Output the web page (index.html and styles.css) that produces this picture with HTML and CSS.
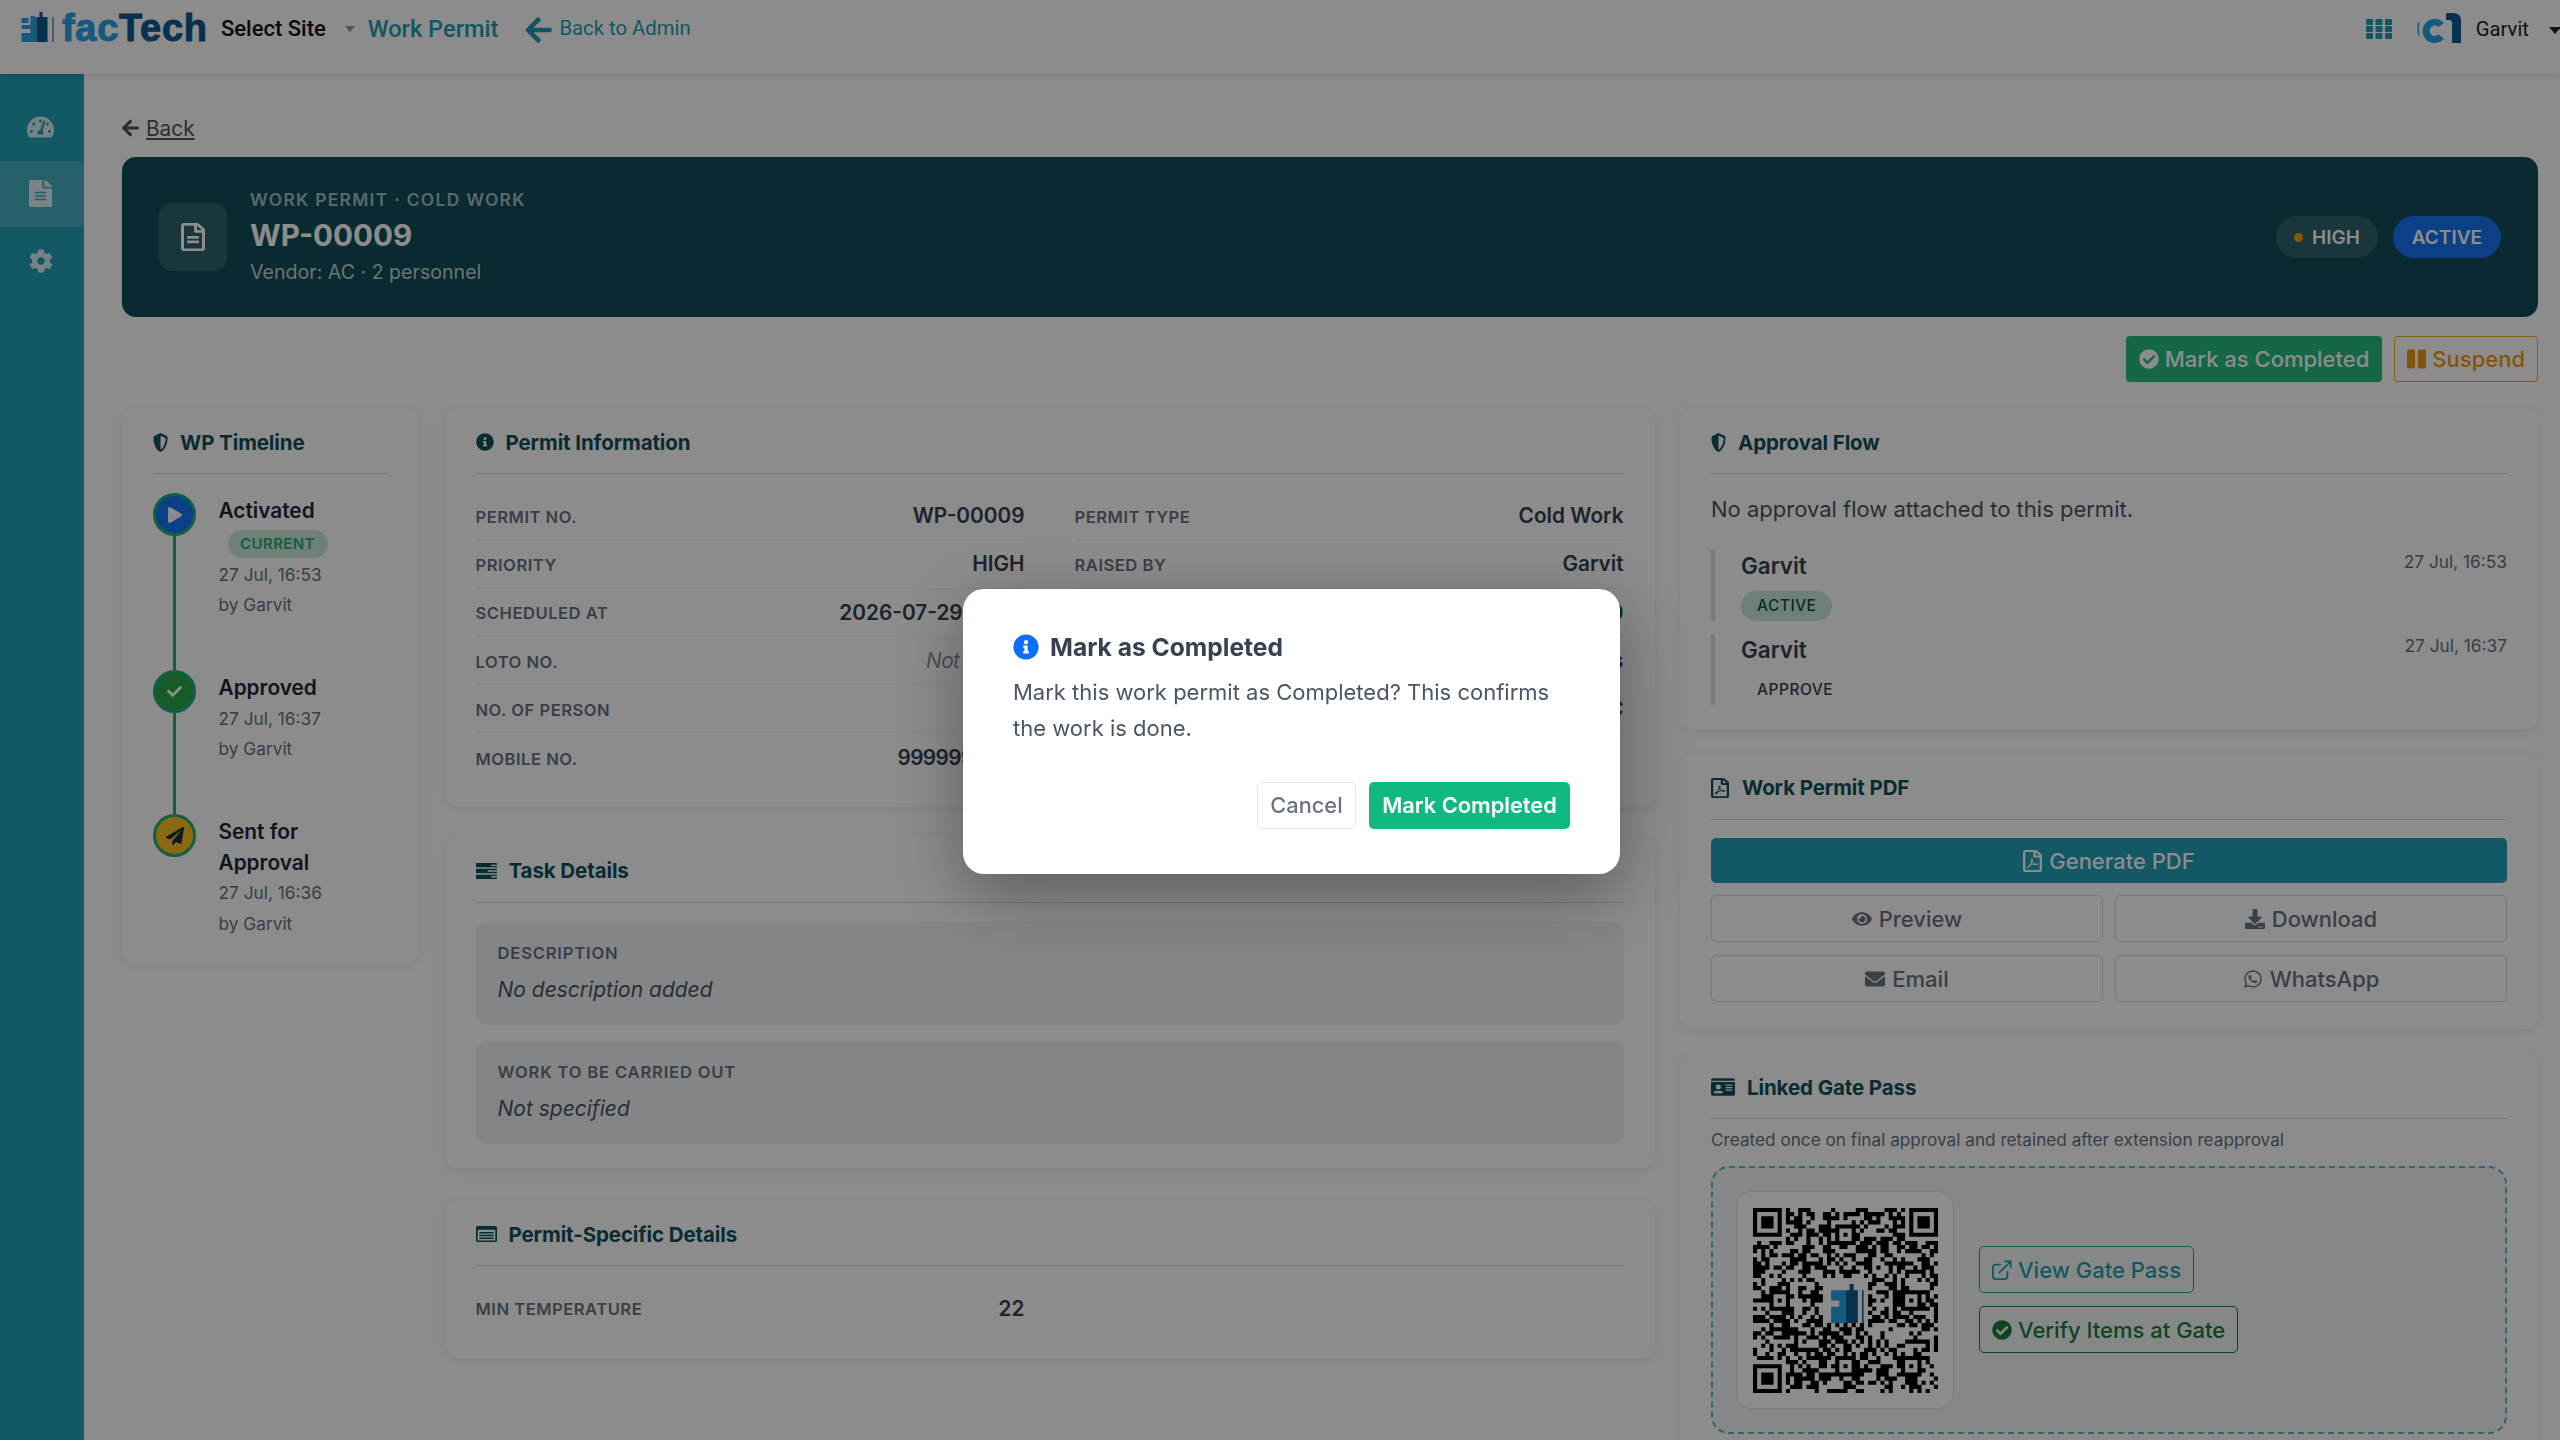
FILE: index.html
```html
<!DOCTYPE html>
<html lang="en">
<head>
<meta charset="utf-8">
<title>WP-00009</title>
<link rel="stylesheet" href="styles.css">
</head>
<body>
<svg class="sprite" xmlns="http://www.w3.org/2000/svg">
<symbol id="i-gauge" viewBox="0 0 576 512"><path d="M288 32C128.94 32 0 160.94 0 320c0 52.8 14.25 102.26 39.06 144.8 5.61 9.62 16.3 15.2 27.44 15.2h443c11.14 0 21.83-5.58 27.44-15.2C561.75 422.26 576 372.8 576 320c0-159.06-128.94-288-288-288zm0 64c14.71 0 26.58 10.13 30.32 23.65-1.11 2.26-2.64 4.23-3.45 6.67l-9.22 27.67c-5.13 3.49-10.97 6.01-17.64 6.01-17.67 0-32-14.33-32-32S270.33 96 288 96zM96 384c-17.67 0-32-14.33-32-32s14.33-32 32-32 32 14.33 32 32-14.33 32-32 32zm48-160c-17.67 0-32-14.33-32-32s14.33-32 32-32 32 14.33 32 32-14.33 32-32 32zm246.77-72.41l-61.33 184C343.13 347.33 352 364.54 352 384c0 11.72-3.38 22.55-8.88 32H232.88c-5.5-9.45-8.88-20.28-8.88-32 0-33.94 26.5-61.43 59.9-63.59l61.34-184.01c4.17-12.56 17.73-19.45 30.36-15.17 12.57 4.19 19.35 17.79 15.17 30.36zm14.66 57.2l15.52-46.55c3.47-1.29 7.13-2.23 11.05-2.23 17.67 0 32 14.33 32 32s-14.33 32-32 32c-11.38-.01-20.89-6.27-26.57-15.22zM480 384c-17.67 0-32-14.33-32-32s14.33-32 32-32 32 14.33 32 32-14.33 32-32 32z"/></symbol>
<symbol id="i-file-s" viewBox="0 0 384 512" preserveAspectRatio="none"><path d="M224 136V0H24C10.7 0 0 10.7 0 24v464c0 13.3 10.7 24 24 24h336c13.3 0 24-10.7 24-24V160H248c-13.2 0-24-10.8-24-24zm64 236c0 6.6-5.4 12-12 12H108c-6.6 0-12-5.4-12-12v-8c0-6.6 5.4-12 12-12h168c6.6 0 12 5.4 12 12v8zm0-64c0 6.6-5.4 12-12 12H108c-6.6 0-12-5.4-12-12v-8c0-6.6 5.4-12 12-12h168c6.6 0 12 5.4 12 12v8zm0-72v8c0 6.6-5.4 12-12 12H108c-6.6 0-12-5.4-12-12v-8c0-6.6 5.4-12 12-12h168c6.6 0 12 5.4 12 12zm96-114.1v6.1H256V0h6.1c6.4 0 12.5 2.5 17 7l97.9 98c4.5 4.5 7 10.6 7 16.9z"/></symbol>
<symbol id="i-file-r" viewBox="0 0 384 512" preserveAspectRatio="none"><path d="M288 248v28c0 6.6-5.4 12-12 12H108c-6.6 0-12-5.4-12-12v-28c0-6.6 5.4-12 12-12h168c6.6 0 12 5.4 12 12zm-12 72H108c-6.6 0-12 5.4-12 12v28c0 6.6 5.4 12 12 12h168c6.6 0 12-5.4 12-12v-28c0-6.6-5.4-12-12-12zm108-188.1V464c0 26.5-21.5 48-48 48H48c-26.5 0-48-21.5-48-48V48C0 21.5 21.5 0 48 0h204.1C264.8 0 277 5.1 286 14.1L369.9 98c9 8.9 14.1 21.2 14.1 33.9zm-128-80V128h76.1L256 51.9zM336 464V176H232c-13.3 0-24-10.7-24-24V48H48v416h288z"/></symbol>
<symbol id="i-cog" viewBox="0 0 512 512"><path d="M487.4 315.7l-42.6-24.6c4.3-23.2 4.3-47 0-70.2l42.6-24.6c4.9-2.8 7.1-8.6 5.5-14-11.1-35.6-30-67.8-54.7-94.6-3.8-4.1-10-5.1-14.8-2.3L380.8 110c-17.9-15.4-38.5-27.3-60.8-35.1V25.8c0-5.6-3.9-10.5-9.4-11.7-36.7-8.2-74.3-7.8-109.2 0-5.5 1.2-9.4 6.1-9.4 11.7V75c-22.2 7.9-42.8 19.8-60.8 35.1L88.7 85.5c-4.9-2.8-11-1.9-14.8 2.3-24.7 26.7-43.6 58.9-54.7 94.6-1.7 5.4.6 11.2 5.5 14L67.3 221c-4.3 23.2-4.3 47 0 70.2l-42.6 24.6c-4.9 2.8-7.1 8.6-5.5 14 11.1 35.6 30 67.8 54.7 94.6 3.8 4.1 10 5.1 14.8 2.3l42.6-24.6c17.9 15.4 38.5 27.3 60.8 35.1v49.2c0 5.6 3.9 10.5 9.4 11.7 36.7 8.2 74.3 7.8 109.2 0 5.5-1.2 9.4-6.1 9.4-11.7v-49.2c22.2-7.9 42.8-19.8 60.8-35.1l42.6 24.6c4.9 2.8 11 1.9 14.8-2.3 24.7-26.7 43.6-58.9 54.7-94.6 1.5-5.5-.7-11.3-5.6-14.1zM256 336c-44.1 0-80-35.9-80-80s35.9-80 80-80 80 35.9 80 80-35.9 80-80 80z"/></symbol>
<symbol id="i-left" viewBox="0 0 448 512"><path d="M257.5 445.1l-22.2 22.2c-9.4 9.4-24.6 9.4-33.9 0L7 273c-9.4-9.4-9.4-24.6 0-33.9L201.4 44.7c9.4-9.4 24.6-9.4 33.9 0l22.2 22.2c9.5 9.5 9.3 25-.4 34.3L136.6 216H424c13.3 0 24 10.7 24 24v32c0 13.3-10.7 24-24 24H136.6l120.5 114.8c9.8 9.3 10 24.8.4 34.3z"/></symbol>
<symbol id="i-check-c" viewBox="0 0 512 512"><path d="M504 256c0 136.967-111.033 248-248 248S8 392.967 8 256 119.033 8 256 8s248 111.033 248 248zM227.314 387.314l184-184c6.248-6.248 6.248-16.379 0-22.627l-22.627-22.627c-6.248-6.249-16.379-6.249-22.628 0L216 308.118l-70.059-70.059c-6.248-6.248-16.379-6.248-22.628 0l-22.627 22.627c-6.248 6.248-6.248 16.379 0 22.627l104 104c6.249 6.25 16.379 6.25 22.628.001z"/></symbol>
<symbol id="i-pause" viewBox="0 0 448 512"><path d="M144 479H48c-26.5 0-48-21.5-48-48V79c0-26.5 21.5-48 48-48h96c26.5 0 48 21.5 48 48v352c0 26.5-21.5 48-48 48zm304-48V79c0-26.5-21.5-48-48-48h-96c-26.5 0-48 21.5-48 48v352c0 26.5 21.5 48 48 48h96c26.5 0 48-21.5 48-48z"/></symbol>
<symbol id="i-shield" viewBox="0 0 512 512" preserveAspectRatio="none"><path d="M466.5 83.7l-192-80a48.15 48.15 0 0 0-36.9 0l-192 80C27.7 91.1 16 108.6 16 128c0 198.5 114.5 335.7 221.5 380.3 11.8 4.9 25.1 4.9 36.9 0C360.1 472.6 496 349.3 496 128c0-19.4-11.7-36.9-29.5-44.3zM256.1 446.3l-.1-381 175.9 73.3c-3.3 151.4-82.1 261.1-175.8 307.7z"/></symbol>
<symbol id="i-info" viewBox="0 0 512 512"><path d="M256 8C119.043 8 8 119.083 8 256c0 136.997 111.043 248 248 248s248-111.003 248-248C504 119.083 392.957 8 256 8zm0 110c23.196 0 42 18.804 42 42s-18.804 42-42 42-42-18.804-42-42 18.804-42 42-42zm56 254c0 6.627-5.373 12-12 12h-88c-6.627 0-12-5.373-12-12v-24c0-6.627 5.373-12 12-12h12v-64h-12c-6.627 0-12-5.373-12-12v-24c0-6.627 5.373-12 12-12h64c6.627 0 12 5.373 12 12v100h12c6.627 0 12 5.373 12 12v24z"/></symbol>
<symbol id="i-play" viewBox="0 0 448 512"><path d="M424.4 214.7L72.4 6.6C43.8-10.3 0 6.1 0 47.9V464c0 37.5 40.7 60.1 72.4 41.3l352-208c31.4-18.5 31.5-64.1 0-82.6z"/></symbol>
<symbol id="i-check" viewBox="0 0 512 512"><path d="M173.898 439.404l-166.4-166.4c-9.997-9.997-9.997-26.206 0-36.204l36.203-36.204c9.997-9.998 26.207-9.998 36.204 0L192 312.69 432.095 72.596c9.997-9.997 26.207-9.997 36.204 0l36.203 36.204c9.997 9.997 9.997 26.206 0 36.204l-294.4 294.401c-9.998 9.997-26.207 9.997-36.204-.001z"/></symbol>
<symbol id="i-plane" viewBox="0 0 512 512"><path d="M476 3.2L12.5 270.6c-18.1 10.4-15.8 35.6 2.2 43.2L121 358.4l287.3-253.2c5.5-4.9 13.3 2.6 8.6 8.3L176 407v80.5c0 23.6 28.5 32.9 42.5 15.8L282 426l124.6 52.2c14.2 6 30.4-2.9 33-18.2l72-432C515 7.8 493.3-6.8 476 3.2z"/></symbol>
<symbol id="i-eye" viewBox="0 0 576 512"><path d="M572.52 241.4C518.29 135.59 410.93 64 288 64S57.68 135.64 3.48 241.41a32.35 32.35 0 0 0 0 29.19C57.71 376.41 165.07 448 288 448s230.32-71.64 284.52-177.41a32.35 32.35 0 0 0 0-29.19zM288 400a144 144 0 1 1 144-144 143.93 143.93 0 0 1-144 144zm0-240a95.31 95.31 0 0 0-25.31 3.79 47.85 47.85 0 0 1-66.9 66.9A95.78 95.78 0 1 0 288 160z"/></symbol>
<symbol id="i-download" viewBox="0 0 512 512"><path d="M216 0h80c13.3 0 24 10.7 24 24v168h87.7c17.8 0 26.7 21.5 14.1 34.1L269.7 378.3c-7.5 7.5-19.8 7.5-27.3 0L90.1 226.1c-12.6-12.6-3.7-34.1 14.1-34.1H192V24c0-13.3 10.7-24 24-24zm296 376v112c0 13.3-10.7 24-24 24H24c-13.3 0-24-10.7-24-24V376c0-13.3 10.7-24 24-24h146.7l49 49c20.1 20.1 52.5 20.1 72.6 0l49-49H488c13.3 0 24 10.7 24 24zm-124 88c0-11-9-20-20-20s-20 9-20 20 9 20 20 20 20-9 20-20zm64 0c0-11-9-20-20-20s-20 9-20 20 9 20 20 20 20-9 20-20z"/></symbol>
<symbol id="i-mail" viewBox="0 0 512 512"><path d="M502.3 190.8c3.9-3.1 9.7-.2 9.7 4.7V400c0 26.5-21.5 48-48 48H48c-26.5 0-48-21.5-48-48V195.6c0-5 5.7-7.8 9.7-4.7 22.4 17.4 52.1 39.5 154.1 113.6 21.1 15.4 56.7 47.8 92.2 47.6 35.7.3 72-32.8 92.3-47.6 102-74.1 131.6-96.3 154-113.7zM256 320c23.2.4 56.6-29.2 73.4-41.4 132.7-96.3 142.8-104.7 173.4-128.7 5.8-4.5 9.2-11.5 9.2-18.9v-19c0-26.5-21.5-48-48-48H48C21.5 64 0 85.5 0 112v19c0 7.4 3.4 14.3 9.2 18.9 30.6 23.9 40.7 32.4 173.4 128.7 16.8 12.2 50.2 41.8 73.4 41.4z"/></symbol>
<symbol id="i-wa" viewBox="0 0 448 512"><path d="M380.9 97.1C339 55.1 283.2 32 223.9 32c-122.4 0-222 99.6-222 222 0 39.1 10.2 77.3 29.6 111L0 480l117.7-30.9c32.4 17.7 68.9 27 106.1 27h.1c122.3 0 224.1-99.6 224.1-222 0-59.3-25.2-115-67.1-157zm-157 341.6c-33.2 0-65.7-8.9-94-25.7l-6.7-4-69.8 18.3L72 359.2l-4.4-7c-18.5-29.4-28.2-63.3-28.2-98.2 0-101.7 82.8-184.5 184.6-184.5 49.3 0 95.6 19.2 130.4 54.1 34.8 34.9 56.2 81.2 56.1 130.5 0 101.8-84.9 184.6-186.6 184.6zm101.2-138.2c-5.5-2.8-32.8-16.2-37.9-18-5.1-1.9-8.8-2.8-12.5 2.8-3.7 5.6-14.3 18-17.6 21.8-3.2 3.7-6.5 4.2-12 1.4-32.6-16.3-54-29.1-75.5-66-5.7-9.8 5.7-9.1 16.3-30.3 1.8-3.7.9-6.9-.5-9.7-1.4-2.8-12.5-30.1-17.1-41.2-4.5-10.8-9.1-9.3-12.5-9.5-3.2-.2-6.9-.2-10.6-.2-3.7 0-9.7 1.4-14.8 6.9-5.1 5.6-19.4 19-19.4 46.3 0 27.3 19.9 53.7 22.6 57.4 2.8 3.7 39.1 59.7 94.8 83.8 35.2 15.2 49 16.5 66.6 13.9 10.7-1.6 32.8-13.4 37.4-26.4 4.6-13 4.6-24.1 3.2-26.4-1.3-2.5-5-3.9-10.5-6.6z"/></symbol>
<symbol id="i-pdf" viewBox="0 0 384 512" preserveAspectRatio="none"><path d="M369.9 97.9L286 14C277 5 264.8-.1 252.1-.1H48C21.5 0 0 21.5 0 48v416c0 26.5 21.5 48 48 48h288c26.5 0 48-21.5 48-48V131.9c0-12.7-5.1-25-14.1-34zM332.1 128H256V51.9l76.1 76.1zM48 464V48h160v104c0 13.3 10.7 24 24 24h104v288H48zm250.2-143.7c-12.2-12-47-8.7-64.4-6.5-17.2-10.5-28.7-25-36.8-46.3 3.9-16.1 10.1-40.6 5.4-56-4.2-26.2-37.8-23.6-42.6-5.9-4.4 16.1-.4 38.5 7 67.1-10 23.9-24.9 56-35.4 74.4-20 10.3-47 26.2-51 46.2-3.3 15.8 26 55.2 76.1-31.2 22.4-7.4 46.8-16.5 68.4-20.1 18.9 10.2 41 17 55.8 17 25.5 0 28-28.2 17.5-38.7zm-198.1 77.8c5.1-13.7 24.5-29.5 30.4-35-19 30.3-30.4 35.7-30.4 35zm81.6-190.6c7.4 0 6.7 32.1 1.8 40.8-4.4-13.9-4.3-40.8-1.8-40.8zm-24.4 136.6c9.7-16.9 18-37 24.7-54.7 8.3 15.1 18.9 27.2 30.1 35.5-20.8 4.3-38.9 13.1-54.8 19.2zm131.6-5s-5 6-37.3-7.8c35.1-2.6 40.9 5.4 37.3 7.8z"/></symbol>
<symbol id="i-idcard" viewBox="0 0 576 512" preserveAspectRatio="none"><path d="M528 32H48C21.5 32 0 53.5 0 80v16h576V80c0-26.5-21.5-48-48-48zM0 432c0 26.5 21.5 48 48 48h480c26.5 0 48-21.5 48-48V128H0v304zm352-232c0-4.4 3.6-8 8-8h144c4.4 0 8 3.6 8 8v16c0 4.4-3.6 8-8 8H360c-4.4 0-8-3.6-8-8v-16zm0 64c0-4.4 3.6-8 8-8h144c4.4 0 8 3.6 8 8v16c0 4.4-3.6 8-8 8H360c-4.4 0-8-3.6-8-8v-16zm0 64c0-4.4 3.6-8 8-8h144c4.4 0 8 3.6 8 8v16c0 4.4-3.6 8-8 8H360c-4.4 0-8-3.6-8-8v-16zM176 192c35.3 0 64 28.7 64 64s-28.7 64-64 64-64-28.7-64-64 28.7-64 64-64zM67.1 396.2C75.5 370.5 99.6 352 128 352h8.2c12.3 5.1 25.7 8 39.8 8s27.6-2.9 39.8-8h8.2c28.4 0 52.5 18.5 60.9 44.2 3.2 9.9-5.2 19.8-15.6 19.8H82.7c-10.4 0-18.8-10-15.6-19.8z"/></symbol>
<symbol id="i-bars" viewBox="0 0 25 22" preserveAspectRatio="none"><path d="M1 0h23a1 1 0 0 1 1 1v1.500h-7v1.500h7v1a1 1 0 0 1-1 1H1a1 1 0 0 1-1-1V1a1 1 0 0 1 1-1zM1 8h23a1 1 0 0 1 1 1v1h-11v2h11v1a1 1 0 0 1-1 1H1a1 1 0 0 1-1-1V9a1 1 0 0 1 1-1zM1 16h23a1 1 0 0 1 1 1v1h-7v2h7v1a1 1 0 0 1-1 1H1a1 1 0 0 1-1-1v-4a1 1 0 0 1 1-1z"/></symbol>
<symbol id="i-list" viewBox="0 0 25 21" preserveAspectRatio="none"><path fill-rule="evenodd" d="M2 0h21a2 2 0 0 1 2 2v17a2 2 0 0 1-2 2H2a2 2 0 0 1-2-2V2a2 2 0 0 1 2-2zm0 5v14h21V5H2zm2 3h17v2H4V8zm0 3.500h17v2H4v-2zM4 15h17v2H4v-2z"/></symbol>
<symbol id="i-ext" viewBox="0 0 22 22"><path fill="none" stroke="currentColor" stroke-width="2" stroke-linecap="round" d="M17 13v5a3 3 0 0 1-3 3H4a3 3 0 0 1-3-3V8a3 3 0 0 1 3-3h5M8 14L20 2M14 1.500h6.500V8"/></symbol>
<symbol id="i-grid" viewBox="0 0 26 20"><path d="M1 0h5a1 1 0 0 1 1 1v4a1 1 0 0 1-1 1H1a1 1 0 0 1-1-1V1a1 1 0 0 1 1-1zm9.500 0h5a1 1 0 0 1 1 1v4a1 1 0 0 1-1 1h-5a1 1 0 0 1-1-1V1a1 1 0 0 1 1-1zM20 0h5a1 1 0 0 1 1 1v4a1 1 0 0 1-1 1h-5a1 1 0 0 1-1-1V1a1 1 0 0 1 1-1zM1 7h5a1 1 0 0 1 1 1v4a1 1 0 0 1-1 1H1a1 1 0 0 1-1-1V8a1 1 0 0 1 1-1zm9.500 0h5a1 1 0 0 1 1 1v4a1 1 0 0 1-1 1h-5a1 1 0 0 1-1-1V8a1 1 0 0 1 1-1zM20 7h5a1 1 0 0 1 1 1v4a1 1 0 0 1-1 1h-5a1 1 0 0 1-1-1V8a1 1 0 0 1 1-1zM1 14h5a1 1 0 0 1 1 1v4a1 1 0 0 1-1 1H1a1 1 0 0 1-1-1v-4a1 1 0 0 1 1-1zm9.500 0h5a1 1 0 0 1 1 1v4a1 1 0 0 1-1 1h-5a1 1 0 0 1-1-1v-4a1 1 0 0 1 1-1zM20 14h5a1 1 0 0 1 1 1v4a1 1 0 0 1-1 1h-5a1 1 0 0 1-1-1v-4a1 1 0 0 1 1-1z"/></symbol>
<symbol id="i-mark" viewBox="0 0 32 30"><path fill="#27a2e8" d="M0 6h7v5H0zM9 4h5v2h1v24H0v-9h9v-4H0v-4h9z"/><path fill="#0f5a92" d="M15 5h3V0h3v5h5v25H15z"/><path fill="#0f5a92" d="M31 5h1v25h-1z"/></symbol>
</svg>

<header class="topbar">
  <div class="brand">
    <svg class="brand-mark"><use href="#i-mark"/></svg>
    <span class="brand-text"><span class="brand-light">fac</span>Tech</span>
  </div>
  <span class="site">Select Site</span>
  <span class="caret caret-grey"></span>
  <span class="page-name">Work Permit</span>
  <svg class="back-admin-ico"><use href="#i-left"/></svg>
  <span class="back-admin">Back to Admin</span>
  <div class="top-right">
    <svg class="grid-ico"><use href="#i-grid"/></svg>
    <svg class="user-logo" viewBox="0 0 45 30">
      <path fill="#27a2e8" d="M1 9Q-.5 16 1.500 23L2.500 22Q1.200 16 2.500 10z"/>
      <path fill="#27a2e8" d="M18 6a12 12 0 1 0 9 19.500l-5.500-4a5.200 5.200 0 1 1 0-7.500l5.500-4A12 12 0 0 0 18 6z"/>
      <path fill="#0f5a92" d="M29 0h7q8 0 8 8v22h-9V10q0-3-3-3h-3z"/>
    </svg>
    <span class="user-name">Garvit</span>
    <span class="caret caret-dark"></span>
  </div>
</header>

<div class="shell">
  <nav class="sidebar">
    <div class="side-item"><svg class="side-gauge"><use href="#i-gauge"/></svg></div>
    <div class="side-item side-active"><svg class="side-file"><use href="#i-file-s"/></svg></div>
    <div class="side-item"><svg class="side-cog"><use href="#i-cog"/></svg></div>
  </nav>

  <main class="main">
    <div class="back-row">
      <svg class="back-ico"><use href="#i-left"/></svg>
      <span class="back-link">Back</span>
    </div>

    <section class="banner">
      <div class="banner-ico"><svg class="banner-file"><use href="#i-file-r"/></svg></div>
      <div class="banner-text">
        <div class="banner-kicker">WORK PERMIT · COLD WORK</div>
        <div class="banner-title">WP-00009</div>
        <div class="banner-sub">Vendor: AC · 2 personnel</div>
      </div>
      <div class="banner-chips">
        <span class="chip chip-high"><span class="chip-dot"></span>HIGH</span>
        <span class="chip chip-active">ACTIVE</span>
      </div>
    </section>

    <div class="actions">
      <button class="act act-green"><svg class="act-ico"><use href="#i-check-c"/></svg>Mark as Completed</button>
      <button class="act act-amber"><svg class="act-ico act-pause"><use href="#i-pause"/></svg>Suspend</button>
    </div>

    <div class="columns">
      <aside class="col">
        <section class="card card-timeline">
          <h3 class="card-title"><svg class="ct-ico ct-shield"><use href="#i-shield"/></svg><span>WP Timeline</span></h3>
          <div class="timeline">
            <div class="tl-item tl-first">
              <div class="tl-rail"><span class="tl-dot dot-blue"><svg class="dot-ico"><use href="#i-play"/></svg></span><span class="tl-line"></span></div>
              <div class="tl-body">
                <div class="tl-name">Activated</div>
                <span class="tl-current">CURRENT</span>
                <div class="tl-meta">27 Jul, 16:53</div>
                <div class="tl-meta">by Garvit</div>
              </div>
            </div>
            <div class="tl-item">
              <div class="tl-rail"><span class="tl-dot dot-green"><svg class="dot-ico dot-ico-sm"><use href="#i-check"/></svg></span><span class="tl-line"></span></div>
              <div class="tl-body">
                <div class="tl-name">Approved</div>
                <div class="tl-meta">27 Jul, 16:37</div>
                <div class="tl-meta">by Garvit</div>
              </div>
            </div>
            <div class="tl-item tl-last">
              <div class="tl-rail"><span class="tl-dot dot-yellow"><svg class="dot-ico dot-ico-dark"><use href="#i-plane"/></svg></span></div>
              <div class="tl-body">
                <div class="tl-name">Sent for<br>Approval</div>
                <div class="tl-meta">27 Jul, 16:36</div>
                <div class="tl-meta">by Garvit</div>
              </div>
            </div>
          </div>
        </section>
      </aside>

      <div class="col col-mid">
        <section class="card">
          <h3 class="card-title"><svg class="ct-ico ct-info"><use href="#i-info"/></svg><span>Permit Information</span></h3>
          <div class="info-grid">
            <div class="info-row"><span class="info-label">PERMIT NO.</span><span class="info-val">WP-00009</span></div>
            <div class="info-row"><span class="info-label">PERMIT TYPE</span><span class="info-val">Cold Work</span></div>
            <div class="info-row"><span class="info-label">PRIORITY</span><span class="info-val">HIGH</span></div>
            <div class="info-row"><span class="info-label">RAISED BY</span><span class="info-val">Garvit</span></div>
            <div class="info-row"><span class="info-label">SCHEDULED AT</span><span class="info-val">2026-07-29 10:00</span></div>
            <div class="info-row"><span class="info-val">2026-07-29 18:00</span></div>
            <div class="info-row"><span class="info-label">LOTO NO.</span><span class="info-val info-muted">Not added</span></div>
            <div class="info-row"><span class="info-val">Yes</span></div>
            <div class="info-row"><span class="info-label">NO. OF PERSON</span></div>
            <div class="info-row"><span class="info-val">AC</span></div>
            <div class="info-row info-end"><span class="info-label">MOBILE NO.</span><span class="info-val info-phone">9999999999</span></div>
            <div class="info-row info-end"></div>
          </div>
        </section>

        <section class="card card-task">
          <h3 class="card-title"><svg class="ct-ico ct-bars"><use href="#i-bars"/></svg><span>Task Details</span></h3>
          <div class="task-box task-first">
            <div class="task-label">DESCRIPTION</div>
            <div class="task-val">No description added</div>
          </div>
          <div class="task-box">
            <div class="task-label">WORK TO BE CARRIED OUT</div>
            <div class="task-val">Not specified</div>
          </div>
        </section>

        <section class="card card-spec">
          <h3 class="card-title"><svg class="ct-ico ct-bars"><use href="#i-list"/></svg><span>Permit-Specific Details</span></h3>
          <div class="info-grid">
            <div class="info-row info-end"><span class="info-label">MIN TEMPERATURE</span><span class="info-val">22</span></div>
          </div>
        </section>
      </div>

      <div class="col col-right">
        <section class="card">
          <h3 class="card-title"><svg class="ct-ico ct-shield"><use href="#i-shield"/></svg><span>Approval Flow</span></h3>
          <p class="flow-empty">No approval flow attached to this permit.</p>
          <div class="flow-entry flow-first">
            <div class="flow-top"><span class="flow-name">Garvit</span><span class="flow-time">27 Jul, 16:53</span></div>
            <span class="flow-chip flow-chip-active">ACTIVE</span>
          </div>
          <div class="flow-entry">
            <div class="flow-top"><span class="flow-name">Garvit</span><span class="flow-time">27 Jul, 16:37</span></div>
            <span class="flow-chip">APPROVE</span>
          </div>
        </section>

        <section class="card card-pdf">
          <h3 class="card-title"><svg class="ct-ico ct-pdf"><use href="#i-pdf"/></svg><span>Work Permit PDF</span></h3>
          <button class="pdf-gen"><svg class="btn-ico btn-pdf"><use href="#i-pdf"/></svg>Generate PDF</button>
          <div class="pdf-grid">
            <button class="pdf-btn"><svg class="btn-ico"><use href="#i-eye"/></svg>Preview</button>
            <button class="pdf-btn"><svg class="btn-ico"><use href="#i-download"/></svg>Download</button>
            <button class="pdf-btn"><svg class="btn-ico"><use href="#i-mail"/></svg>Email</button>
            <button class="pdf-btn"><svg class="btn-ico"><use href="#i-wa"/></svg>WhatsApp</button>
          </div>
        </section>

        <section class="card card-gate">
          <h3 class="card-title"><svg class="ct-ico ct-id"><use href="#i-idcard"/></svg><span>Linked Gate Pass</span></h3>
          <p class="gate-note">Created once on final approval and retained after extension reapproval</p>
          <div class="gate-box">
            <div class="qr-card"><svg id="qr" class="qr" viewBox="0 0 45 45"></svg></div>
            <div class="gate-actions">
              <button class="gate-btn gate-teal"><svg class="btn-ico"><use href="#i-ext"/></svg>View Gate Pass</button>
              <button class="gate-btn gate-green"><svg class="btn-ico"><use href="#i-check-c"/></svg>Verify Items at Gate</button>
            </div>
          </div>
        </section>
      </div>
    </div>
  </main>
</div>

<div class="overlay">
  <div class="modal">
    <div class="modal-head"><svg class="modal-ico"><use href="#i-info"/></svg><h2 class="modal-title">Mark as Completed</h2></div>
    <p class="modal-text">Mark this work permit as Completed? This confirms the work is done.</p>
    <div class="modal-foot">
      <button class="m-cancel">Cancel</button>
      <button class="m-ok">Mark Completed</button>
    </div>
  </div>
</div>
<script src="qr.js"></script>
</body>
</html>
```
FILE: styles.css
```css
* { box-sizing: border-box; }
html, body { margin: 0; height: 1440px; overflow: hidden; }
body { font-family: Inter, "Noto Sans", sans-serif; background: #fff; color: #1f2937; display: flex; flex-direction: column; width: 2560px; }
.sprite { width: 0; height: 0; position: absolute; }
svg { fill: currentColor; display: block; flex: none; }
button { font-family: inherit; cursor: pointer; }
h2, h3, p { margin: 0; }

.topbar { height: 74px; flex: none; display: flex; align-items: flex-start; padding: 0 0 0 21px; font-family: Roboto, sans-serif; box-shadow: 0 2px 6px rgba(0,0,0,.1); position: relative; z-index: 1; background: #fff; }
.brand { display: flex; align-items: flex-start; width: 200px; height: 60px; }
.brand-mark { width: 33px; height: 30px; margin-top: 12px; color: #0f5a92; }
.brand-text { font-family: "Liberation Sans", sans-serif; font-weight: 700; font-size: 38px; line-height: 56px; margin-left: 8px; letter-spacing: .7px; color: #0f5a92; -webkit-text-stroke: 1px currentColor; }
.brand-light { color: #27a2e8; }
.site { font-size: 22px; font-weight: 500; color: #111; line-height: 58px; }
.caret { width: 0; height: 0; border-left: 6px solid transparent; border-right: 6px solid transparent; border-top: 7px solid #666; }
.caret-grey { margin: 26px 13px 0 19px; border-left-width: 5px; border-right-width: 5px; border-top-width: 6px; border-top-color: #999; }
.page-name { font-size: 23.600px; font-weight: 500; color: #1f9fb5; line-height: 58px; }
.back-admin-ico { width: 27px; height: 30px; margin: 15px 7px 0 27px; color: #1f9fb5; }
.back-admin { font-size: 20.300px; color: #1f9fb5; line-height: 57px; }
.top-right { margin-left: auto; display: flex; align-items: flex-start; }
.grid-ico { width: 26px; height: 20px; margin-top: 19px; margin-right: 1px; color: #1f9fb5; }
.user-logo { width: 45px; height: 30px; margin: 13px 0 0 24px; }
.user-name { font-size: 20.300px; color: #222; line-height: 58px; margin-left: 14px; }
.caret-dark { margin: 27px -1px 0 20px; border-top-color: #222; border-left-width: 6.500px; border-right-width: 6.500px; border-top-width: 7px; }

.shell { flex: 1; display: flex; min-height: 0; }
.sidebar { width: 84px; flex: none; background: #23a0b9; padding-top: 20px; }
.side-item { height: 66.500px; padding-right: 3px; display: flex; align-items: center; justify-content: center; color: rgba(255,255,255,.82); }
.side-active { background: rgba(255,255,255,.16); }
.side-gauge { width: 27px; height: 24px; }
.side-file { width: 23px; height: 27px; }
.side-cog { width: 24px; height: 24px; margin-top: 1px; }

.main { flex: 1; padding: 39px 22px 0 38px; min-width: 0; overflow: hidden; }
.back-row { display: flex; align-items: center; height: 30px; gap: 7px; color: #555; font-size: 20.800px; }
.back-ico { width: 17px; height: 20px; }
.back-link { text-decoration: underline; }

.banner { margin-top: 14px; height: 160px; background: #134e5a; border-radius: 14px; display: flex; align-items: center; padding: 0 37px; color: #fff; }
.banner-ico { width: 68px; height: 68px; border-radius: 13px; background: rgba(255,255,255,.12); display: flex; align-items: center; justify-content: center; margin-right: 23px; }
.banner-file { width: 24px; height: 28px; }
.banner-kicker { font-size: 17.400px; font-weight: 600; letter-spacing: 1.3px; color: rgba(255,255,255,.65); line-height: 26px; margin-top: -2px; }
.banner-title { font-size: 29.600px; font-weight: 700; line-height: 42px; margin-top: 1px; }
.banner-sub { font-size: 19.600px; color: rgba(255,255,255,.75); line-height: 28px; margin-top: 2px; }
.banner-chips { margin-left: auto; display: flex; gap: 15px; }
.chip { height: 42px; border-radius: 21px; display: flex; align-items: center; font-size: 19px; font-weight: 600; }
.chip-high { padding: 0 18px; background: rgba(255,255,255,.12); gap: 9px; }
.chip-dot { width: 9px; height: 9px; border-radius: 50%; background: #f59e0b; }
.chip-active { padding: 0 19px; background: #1574f5; }

.actions { margin-top: 19px; display: flex; justify-content: flex-end; gap: 12px; }
.act { height: 46px; border-radius: 4px; display: flex; align-items: center; gap: 6px; font-size: 22px; font-weight: 500; padding: 0 12px; border: 1px solid transparent; }
.act-green { background: #25bd80; color: #fff; }
.act-amber { background: transparent; border-color: #f5a623; color: #f09a14; padding: 0 12px; }
.act-ico { width: 20px; height: 20px; }
.act-pause { width: 19px; height: 22px; }

.columns { margin-top: 26px; display: grid; grid-template-columns: 297px 1210px 858px; column-gap: 25.500px; align-items: start; }
.col { display: flex; flex-direction: column; min-width: 0; }
.card { background: #fff; border-radius: 14px; padding: 19px 31px 25px; box-shadow: 0 2px 10px rgba(0,0,0,.08); }
.card-title { display: flex; align-items: center; height: 47px; padding-bottom: 16px; border-bottom: 1px solid #d5d9de; margin-bottom: 0; font-size: 20.500px; font-weight: 700; letter-spacing: -.1px; color: #12505c; }
.ct-ico { color: #12505c; }
.ct-shield { width: 15px; height: 19px; margin-right: 12px; }
.ct-info { width: 18px; height: 18px; margin-right: 12px; }
.ct-bars { width: 21px; height: 16px; margin-right: 12px; }
.ct-pdf { width: 18px; height: 20px; margin-right: 13px; }
.ct-id { width: 24px; height: 20px; margin-right: 12px; }

.timeline { margin-top: 19px; }
.tl-item { display: flex; gap: 22.500px; align-items: stretch; }
.tl-rail { width: 43px; flex: none; display: flex; flex-direction: column; align-items: center; }
.tl-dot { width: 43px; height: 43px; flex: none; border-radius: 50%; border: 3px solid #21ae7d; display: flex; align-items: center; justify-content: center; color: #fff; }
.dot-blue { background: #1574f5; }
.dot-green { background: #2aa84a; }
.dot-yellow { background: #fbbf24; }
.dot-ico { width: 14px; height: 16px; }
.dot-ico-sm { width: 15px; height: 15px; }
.dot-ico-dark { color: #1f2937; width: 18px; height: 18px; }
.tl-line { width: 3.500px; flex: 1; background: #21ae7d; }
.tl-body { padding-top: 3px; padding-bottom: 49.500px; min-width: 0; }
.tl-last .tl-body { padding-bottom: 0; }
.tl-name { font-size: 20.800px; font-weight: 600; line-height: 30.500px; color: #1f2937; }
.tl-current { display: block; width: 100px; height: 28px; margin: 3px 0 2px 9px; border-radius: 14px; background: #c8e9da; color: #1fae74; font-size: 15px; font-weight: 600; line-height: 28px; text-align: center; letter-spacing: .4px; }
.tl-meta { font-size: 17.300px; line-height: 30.500px; color: #6b7280; }

.col-mid .card-task { margin-top: 30px; }
.col-mid .card-spec { margin-top: 31.500px; }
.info-grid { display: grid; grid-template-columns: 549px 549px; column-gap: 50px; margin-top: 18px; }
.info-row { height: 48.300px; display: flex; align-items: center; justify-content: space-between; border-bottom: 1px solid #edeff2; }
.info-end { border-bottom: 0; }
.info-label { font-size: 16.600px; font-weight: 600; color: #6b7280; letter-spacing: .5px; padding-top: 2px; }
.info-val { font-size: 20.800px; font-weight: 600; color: #374151; margin-left: auto; }
.info-muted { font-style: italic; font-weight: 400; color: #8a8f98; letter-spacing: -.6px; }
.info-phone { letter-spacing: -.6px; }

.task-box { background: #f1f3f5; border-radius: 11px; height: 103px; padding: 19px 22px; margin-top: 16px; }
.task-first { margin-top: 19px; }
.task-label { font-size: 16.600px; font-weight: 600; letter-spacing: .8px; color: #6b7280; line-height: 24px; }
.task-val { font-size: 21px; font-style: italic; color: #4b5563; line-height: 30px; margin-top: 10px; }

.col-right .card-pdf { margin-top: 23.500px; }
.col-right .card-gate { margin-top: 24px; }
.flow-empty { font-size: 22px; color: #4b5563; line-height: 34px; margin-top: 17.500px; }
.flow-entry { border-left: 4px solid #d9dcdf; padding-left: 26px; height: 71px; margin-top: 13px; }
.flow-first { margin-top: 24.500px; }
.flow-top { display: flex; justify-content: space-between; align-items: flex-start; }
.flow-name { font-size: 22.400px; font-weight: 600; color: #374151; line-height: 32px; }
.flow-time { font-size: 17.300px; color: #6b7280; line-height: 24px; }
.flow-chip { display: inline-block; height: 30px; line-height: 30px; padding: 0 16px; border-radius: 15px; font-size: 15.500px; font-weight: 500; letter-spacing: .5px; color: #374151; margin-top: 9px; }
.flow-chip-active { background: #c8e9da; color: #125538; }

.card-pdf { padding-bottom: 27px; }
.pdf-gen { display: flex; align-items: center; justify-content: center; gap: 7px; width: 100%; height: 45px; margin-top: 18.500px; border: 0; border-radius: 5px; background: #23a0b9; color: #fff; font-size: 22px; font-weight: 500; }
.pdf-grid { margin-top: 12px; display: grid; grid-template-columns: 1fr 1fr; gap: 13px 12px; }
.pdf-btn { height: 47px; display: flex; align-items: center; justify-content: center; gap: 7px; background: #fff; border: 1px solid #d8dadd; border-radius: 5px; color: #6b7280; font-size: 22px; font-weight: 500; }
.btn-ico { width: 20px; height: 20px; }
.btn-pdf { width: 19px; height: 22px; }

.gate-note { font-size: 17.200px; color: #6b7280; line-height: 26px; margin-top: 8px; }
.gate-box { margin-top: 13px; border: 2px dashed #5fb6c8; border-radius: 18px; height: 268px; padding: 0 23px; display: flex; align-items: center; gap: 25px; background: #f5f7f8; }
.qr-card { width: 218px; height: 218px; padding: 16px; background: #fff; border: 1px solid #e1e3e5; border-radius: 14px; flex: none; }
.qr { width: 185px; height: 185px; fill: #000; }
.gate-actions { display: flex; flex-direction: column; align-items: flex-start; gap: 13px; padding-bottom: 1px; }
.gate-btn { height: 47px; padding: 0 12px; display: flex; align-items: center; gap: 6px; font-size: 22px; font-weight: 500; border-radius: 5px; background: transparent; border: 1px solid; }
.gate-teal { color: #1f9fb5; border-color: #1f9fb5; }
.gate-green { color: #15803d; border-color: #15803d; }

.overlay { position: fixed; inset: 0; z-index: 10; background: rgba(0,0,0,.45); display: flex; align-items: center; justify-content: center; padding: 22px 0 0 23px; }
.modal { width: 657px; height: 285px; background: #fff; border-radius: 21px; padding: 40px 50px 0; box-shadow: 0 20px 70px rgba(0,0,0,.35); }
.modal-head { display: flex; align-items: center; gap: 11px; height: 36px; }
.modal-ico { width: 26px; height: 26px; color: #0d6efd; }
.modal-title { font-size: 24.600px; font-weight: 700; color: #374151; }
.modal-text { font-size: 22px; line-height: 36px; color: #4b5563; margin-top: 9px; }
.modal-foot { display: flex; justify-content: flex-end; gap: 13px; margin-top: 36px; }
.m-cancel { height: 47px; width: 99px; border: 1px solid #e5e7eb; background: #fff; border-radius: 5px; color: #6b7280; font-size: 21.800px; font-weight: 500; }
.m-ok { height: 47px; width: 201px; border: 0; background: #10b981; border-radius: 5px; color: #fff; font-size: 21.800px; font-weight: 600; }
```
FILE: qr.js
```js
// Draws the decorative gate-pass QR pattern (seeded, so it is stable between loads).
(function () {
  var n = 45, seed = 90817;
  function rnd() { seed = (seed * 1664525 + 1013904223) >>> 0; return (seed >>> 16) / 65536; }
  var m = [], x, y;
  for (y = 0; y < n; y++) { m[y] = []; for (x = 0; x < n; x++) { m[y][x] = rnd() < 0.52; } }
  function finder(ox, oy) {
    for (var j = -1; j < 8; j++) for (var i = -1; i < 8; i++) {
      var px = ox + i, py = oy + j;
      if (px < 0 || py < 0 || px >= n || py >= n) continue;
      var ring = i >= 0 && i <= 6 && j >= 0 && j <= 6 && (i === 0 || i === 6 || j === 0 || j === 6);
      var core = i >= 2 && i <= 4 && j >= 2 && j <= 4;
      m[py][px] = ring || core;
    }
  }
  finder(0, 0); finder(n - 7, 0); finder(0, n - 7);
  function align(cx, cy) {
    for (var j = -2; j <= 2; j++) for (var i = -2; i <= 2; i++) {
      m[cy + j][cx + i] = Math.max(Math.abs(i), Math.abs(j)) !== 1;
    }
  }
  [[22, 6], [6, 22], [38, 22], [22, 38], [38, 38]].forEach(function (p) { align(p[0], p[1]); });
  for (y = 17; y < 28; y++) for (x = 17; x < 28; x++) { m[y][x] = false; }
  var d = "";
  for (y = 0; y < n; y++) for (x = 0; x < n; x++) { if (m[y][x]) d += "M" + x + " " + y + "h1v1h-1z"; }
  var ns = "http://www.w3.org/2000/svg", svg = document.getElementById("qr");
  function path(dd, fill) {
    var p = document.createElementNS(ns, "path");
    p.setAttribute("d", dd); if (fill) p.setAttribute("fill", fill);
    svg.appendChild(p);
  }
  path(d);
  path("M19 20h3.500v8h-3.500z", "#27a2e8");
  path("M19 22.500h2v1.500h-2z", "#fff");
  path("M22.500 20h1v-1.500h1V20h1v8h-3z", "#0f5a92");
  path("M26.500 20h.4v8h-.4z", "#0f5a92");
})();
```
